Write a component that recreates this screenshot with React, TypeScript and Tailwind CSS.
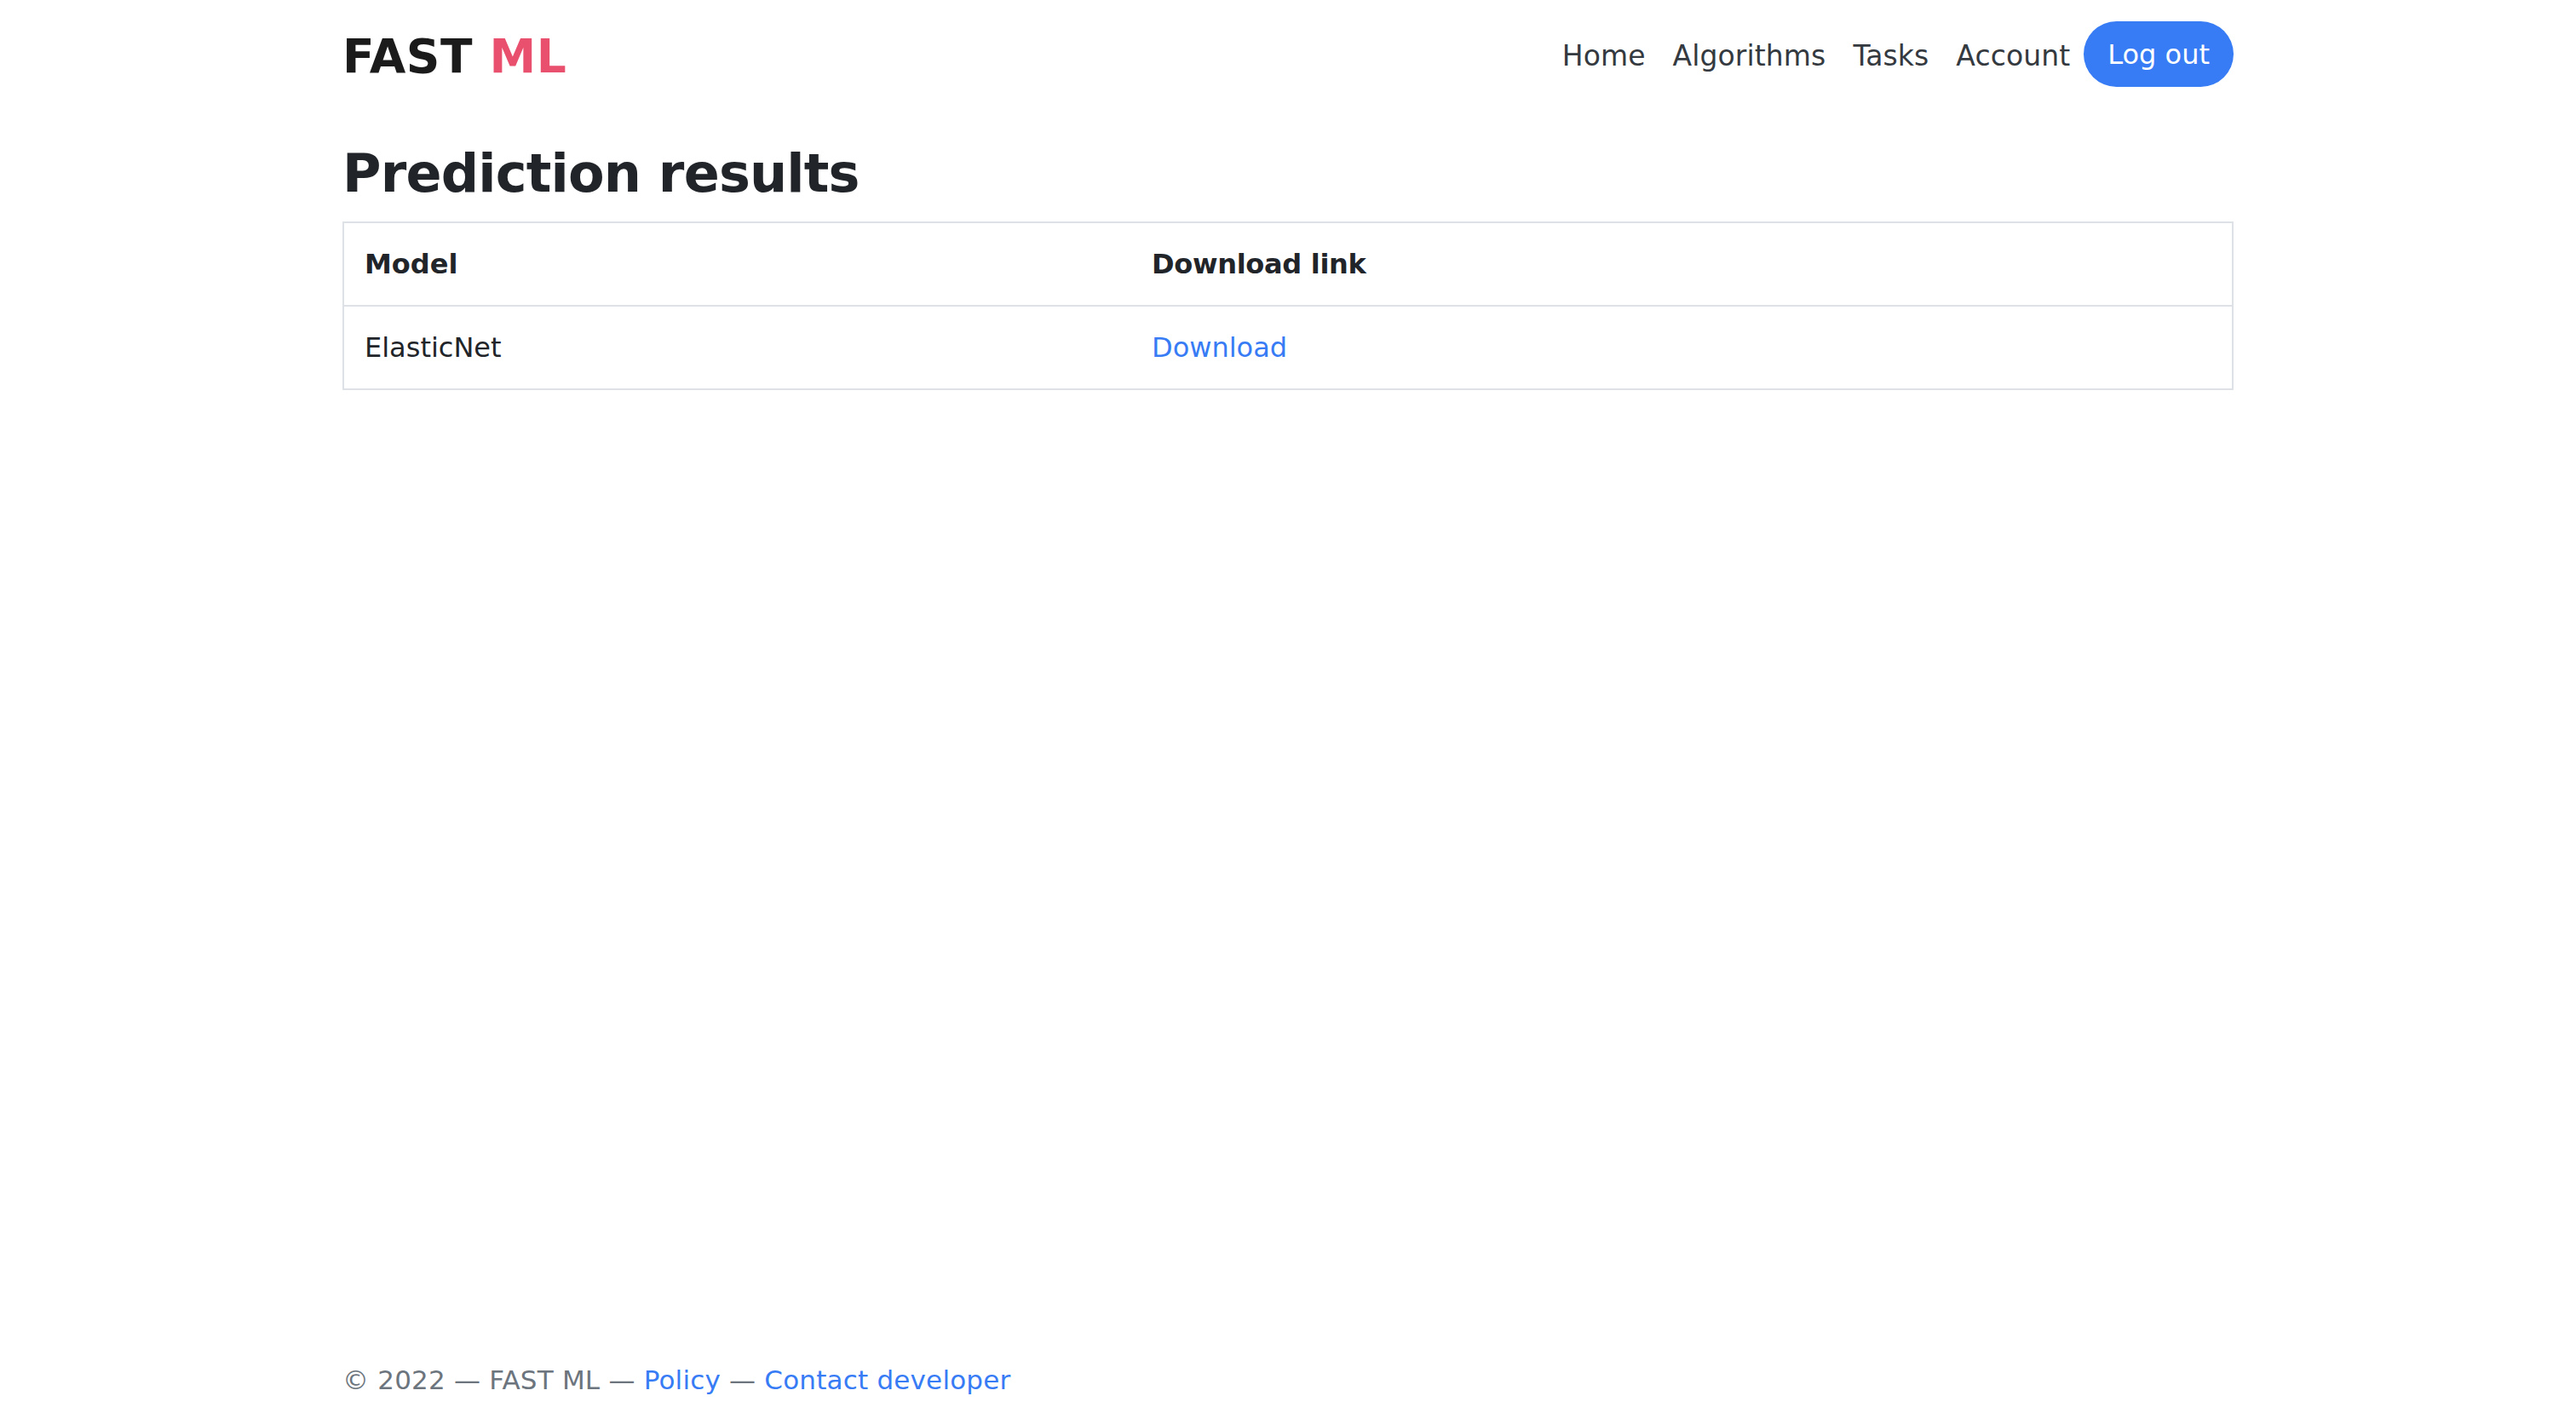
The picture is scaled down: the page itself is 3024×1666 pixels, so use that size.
const NAV_LINKS = ['Home', 'Algorithms', 'Tasks', 'Account'];

export default function App() {
  return (
    <div className="min-h-[1666px] bg-white text-[#212529] font-['DejaVu_Sans',sans-serif] text-[32px] leading-[48px]">
      <div className="mx-auto flex min-h-[1666px] w-[2220px] flex-col">
        <header className="flex h-[127px] items-center justify-between">
          <a href="#" className="mt-[6px] text-[55px] font-bold leading-none tracking-[0.5px] text-[#1b1b1b]">
            FAST <span className="text-[#e8506e]">ML</span>
          </a>
          <nav className="flex items-center">
            {NAV_LINKS.map((label) => (
              <a key={label} href="#" className="px-[16px] pt-[4px] text-[33px] tracking-[0.1px] text-[#343a40]">
                {label}
              </a>
            ))}
            <button className="flex h-[77px] items-center rounded-full bg-[#377cf5] px-[28px] text-white">
              Log out
            </button>
          </nav>
        </header>

        <main>
          <h1 className="mt-[38px] mb-[18px] text-[62px] font-bold leading-[77px] tracking-[-0.8px] text-[#212529]">
            Prediction results
          </h1>
          <table className="w-full border-collapse border-2 border-[#dee2e6]">
            <thead>
              <tr className="border-b-2 border-[#dee2e6]">
                <th className="w-[925px] px-[24px] py-[24px] text-left font-bold">Model</th>
                <th className="px-[24px] py-[24px] text-left font-bold tracking-[-0.3px]">Download link</th>
              </tr>
            </thead>
            <tbody>
              <tr>
                <td className="px-[24px] py-[24px]">ElasticNet</td>
                <td className="px-[24px] py-[24px]">
                  <a href="#" className="text-[#377cf5]">
                    Download
                  </a>
                </td>
              </tr>
            </tbody>
          </table>
        </main>

        <footer className="mt-auto pb-[22px] text-[31px] tracking-[0.2px] text-[#6c757d]">
          © 2022 — FAST ML — <a href="#" className="text-[#377cf5]">Policy</a> —{' '}
          <a href="#" className="text-[#377cf5]">Contact developer</a>
        </footer>
      </div>
    </div>
  );
}
